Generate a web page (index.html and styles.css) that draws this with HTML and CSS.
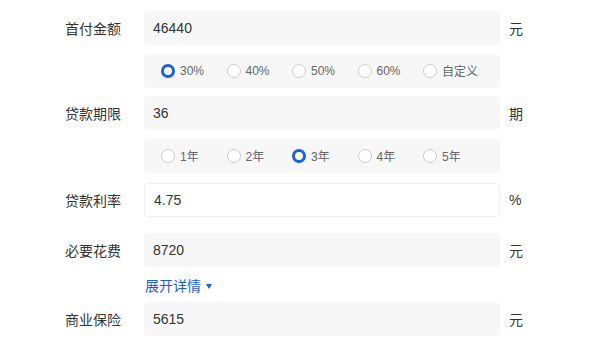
FILE: index.html
```html
<!DOCTYPE html>
<html lang="zh-CN">
<head>
    <meta charset="UTF-8">
    <title>购车计算</title>
    <link rel="stylesheet" href="styles.css">
</head>
<body>

<div class="calc">
    <!-- 首付 -->
    <div class="row">
        <label class="name">首付金额</label>
        <div class="field">46440</div>
        <span class="unit">元</span>
    </div>
    <div class="row">
        <span class="name"></span>
        <div class="opts">
            <span class="opt"><i class="dot on"></i>30%</span>
            <span class="opt"><i class="dot"></i>40%</span>
            <span class="opt"><i class="dot"></i>50%</span>
            <span class="opt"><i class="dot"></i>60%</span>
            <span class="opt"><i class="dot"></i>自定义</span>
        </div>
    </div>

    <!-- 贷款期限 -->
    <div class="row">
        <label class="name">贷款期限</label>
        <div class="field">36</div>
        <span class="unit">期</span>
    </div>
    <div class="row">
        <span class="name"></span>
        <div class="opts">
            <span class="opt"><i class="dot"></i>1年</span>
            <span class="opt"><i class="dot"></i>2年</span>
            <span class="opt"><i class="dot on"></i>3年</span>
            <span class="opt"><i class="dot"></i>4年</span>
            <span class="opt"><i class="dot"></i>5年</span>
        </div>
    </div>

    <div class="row rate">
        <label class="name">贷款利率</label>
        <div class="field white">4.75</div>
        <span class="unit">%</span>
    </div>

    <div class="row fees">
        <label class="name">必要花费</label>
        <div class="field">8720</div>
        <span class="unit">元</span>
    </div>

    <div class="more">
        <a href="#">展开详情</a><span class="arrow"></span>
    </div>

    <div class="row">
        <label class="name">商业保险</label>
        <div class="field">5615</div>
        <span class="unit">元</span>
    </div>
</div>

</body>
</html>
```

FILE: styles.css
```css
body {
    margin: 0;
    background: #fff;
    font-family: "Liberation Sans", "Noto Sans CJK SC", sans-serif;
    color: #333;
}

.calc {
    padding-top: 11px;
    display: flex;
    flex-direction: column;
    gap: 8.5px;
}

.row {
    display: flex;
    align-items: center;
    height: 34px;
}

.name {
    width: 65px;
    padding-left: 65px;
    margin-right: 14px;
    font-size: 14px;
    color: #333;
}

.field {
    width: 356px;
    height: 34px;
    box-sizing: border-box;
    padding: 0 9px;
    line-height: 34px;
    font-size: 14px;
    color: #333;
    background-color: #f7f7f8;
    border-radius: 4px;
}

.field.white {
    background-color: #fff;
    border: 1px solid #eeeeee;
    line-height: 32px;
}

.unit {
    margin-left: 9px;
    font-size: 14px;
    color: #333;
}

.opts {
    width: 356px;
    height: 34px;
    box-sizing: border-box;
    padding-left: 17px;
    display: flex;
    align-items: center;
    background-color: #f7f7f8;
    border-radius: 4px;
}

.opt {
    width: 65.5px;
    display: flex;
    align-items: center;
    font-size: 12px;
    color: #666;
}

.dot {
    width: 14px;
    height: 14px;
    box-sizing: border-box;
    margin-right: 5px;
    border: 1px solid #ccc;
    border-radius: 50%;
    background: #fff;
}

.dot.on {
    border: 3px solid #1c5ee0;
}

.rate {
    margin-top: 1.5px;
}

.fees {
    margin-top: 7.5px;
}

.more {
    height: 16px;
    margin-top: 2px;
    padding-left: 145px;
    display: flex;
    align-items: center;
    font-size: 14px;
}

.more a {
    color: #1c5ee0;
    text-decoration: none;
}

.arrow {
    margin-left: 5px;
    margin-top: 2px;
    border-left: 3.5px solid transparent;
    border-right: 3.5px solid transparent;
    border-top: 5px solid #1c5ee0;
}
```
